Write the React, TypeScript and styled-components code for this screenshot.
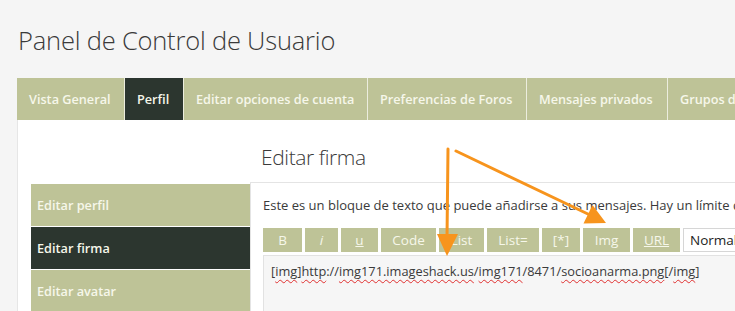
import styled, { createGlobalStyle } from 'styled-components';

const GlobalStyle = createGlobalStyle`
  html, body {
    margin: 0;
    padding: 0;
    background: #f5f5f5;
    font-family: "Open Sans", "Noto Sans", sans-serif;
    overflow: hidden;
  }
`;

const palette = {
  khaki: '#bec397',
  dark: '#2c362f',
  light: '#f6f7ea',
  text: '#3a3a3a',
};

const Page = styled.div`
  position: relative;
  width: 735px;
  height: 311px;
  padding-left: 17px;
  box-sizing: border-box;
  overflow: hidden;
`;

const Title = styled.h1`
  margin: 0;
  height: 78px;
  padding: 23px 0 0 1px;
  box-sizing: border-box;
  font-size: 25.5px;
  font-weight: 300;
  color: ${palette.text};
  letter-spacing: -0.2px;
  white-space: nowrap;
`;

const Tabs = styled.div`
  display: flex;
  gap: 1px;
  height: 42px;
  background: #ecedde;
`;

const Tab = styled.div<{ $w: number; $active?: boolean }>`
  flex: none;
  width: ${(p) => p.$w}px;
  padding-left: 12px;
  box-sizing: border-box;
  display: flex;
  align-items: center;
  background: ${(p) => (p.$active ? palette.dark : palette.khaki)};
  color: ${palette.light};
  font-size: 12.7px;
  font-weight: 600;
  white-space: nowrap;
  overflow: hidden;
`;

const Panel = styled.div`
  display: grid;
  grid-template-columns: 219px 1fr;
  grid-template-rows: 62px 1fr;
  padding-left: 13px;
  height: 191px;
  background: #ffffff;
  border-left: 1px solid #e6e6e6;
  box-sizing: border-box;
`;

const Heading = styled.h2`
  grid-column: 2;
  grid-row: 1;
  margin: 0;
  padding: 23px 0 0 11px;
  font-size: 21px;
  font-weight: 300;
  color: ${palette.text};
  letter-spacing: -0.4px;
`;

const SideMenu = styled.div`
  grid-column: 1;
  grid-row: 2;
  display: flex;
  flex-direction: column;
  gap: 1px;
  padding-top: 2px;
`;

const MenuItem = styled.div<{ $active?: boolean }>`
  height: 42px;
  display: flex;
  align-items: center;
  padding-left: 6px;
  background: ${(p) => (p.$active ? palette.dark : palette.khaki)};
  color: ${palette.light};
  font-size: 12.7px;
  font-weight: 600;
`;

const Box = styled.div`
  grid-column: 2;
  grid-row: 2;
  border-top: 1px solid #e4e4e4;
  border-left: 1px solid #e4e4e4;
  padding: 13px 0 0 12px;
  background: #ffffff;
  overflow: hidden;
`;

const Intro = styled.p`
  margin: 0;
  font-size: 13px;
  line-height: 18px;
  color: ${palette.text};
  white-space: nowrap;
`;

const Toolbar = styled.div`
  display: flex;
  gap: 3px;
  margin-top: 14px;
  height: 24px;
`;

const ToolButton = styled.div<{ $w: number; $italic?: boolean; $underline?: boolean }>`
  flex: none;
  width: ${(p) => p.$w}px;
  display: flex;
  align-items: center;
  justify-content: center;
  background: ${palette.khaki};
  color: ${palette.light};
  font-size: 13.5px;
  font-style: ${(p) => (p.$italic ? 'italic' : 'normal')};
  text-decoration: ${(p) => (p.$underline ? 'underline' : 'none')};
`;

const SizeSelect = styled.div`
  flex: none;
  width: 80px;
  display: flex;
  align-items: center;
  padding-left: 6px;
  background: #ffffff;
  border: 1px solid #d6d6d6;
  box-sizing: border-box;
  font-size: 13.5px;
  color: #222;
`;

const Editor = styled.div`
  margin-top: 3px;
  height: 80px;
  background: #f6f6f6;
  border: 1px solid #e2e2e2;
  border-right: none;
  padding: 6px 0 0 7px;
  font-size: 12.8px;
  color: ${palette.text};
  white-space: nowrap;
`;

const Misspelt = styled.span`
  text-decoration: underline wavy #e03030;
  text-decoration-thickness: 1px;
  text-underline-offset: 3px;
`;

const Arrows = styled.svg`
  position: absolute;
  left: 0;
  top: 0;
  pointer-events: none;
`;

const tabs: [string, number, boolean?][] = [
  ['Vista General', 107],
  ['Perfil', 58, true],
  ['Editar opciones de cuenta', 183],
  ['Preferencias de Foros', 158],
  ['Mensajes privados', 140],
  ['Grupos de usuarios', 150],
];

const buttons: { label: string; w: number; italic?: boolean; underline?: boolean }[] = [
  { label: 'B', w: 39 },
  { label: 'i', w: 33, italic: true },
  { label: 'u', w: 37, underline: true },
  { label: 'Code', w: 55 },
  { label: 'List', w: 45 },
  { label: 'List=', w: 52 },
  { label: '[*]', w: 38 },
  { label: 'Img', w: 47 },
  { label: 'URL', w: 47, underline: true },
];

export default function App() {
  return (
    <>
      <GlobalStyle />
      <Page>
        <Title>Panel de Control de Usuario</Title>
        <Tabs>
          {tabs.map(([label, w, active]) => (
            <Tab key={label} $w={w} $active={active}>
              {label}
            </Tab>
          ))}
        </Tabs>
        <Panel>
          <Heading>Editar firma</Heading>
          <SideMenu>
            <MenuItem>Editar perfil</MenuItem>
            <MenuItem $active>Editar firma</MenuItem>
            <MenuItem>Editar avatar</MenuItem>
          </SideMenu>
          <Box>
            <Intro>
              Este es un bloque de texto que puede añadirse a sus mensajes. Hay un límite de 255 caracteres
            </Intro>
            <Toolbar>
              {buttons.map((b) => (
                <ToolButton key={b.label} $w={b.w} $italic={b.italic} $underline={b.underline}>
                  {b.label}
                </ToolButton>
              ))}
              <SizeSelect>Normal</SizeSelect>
            </Toolbar>
            <Editor>
              [<Misspelt>img</Misspelt>]<Misspelt>http</Misspelt>://<Misspelt>img171.imageshack.us</Misspelt>/
              <Misspelt>img171</Misspelt>/8471/<Misspelt>socioanarma.png</Misspelt>[/<Misspelt>img</Misspelt>]
            </Editor>
          </Box>
        </Panel>
        <Arrows width="735" height="311" viewBox="0 0 735 311">
          <g stroke="#f7941d" strokeWidth="3" strokeLinecap="round" fill="none">
            <line x1="448" y1="149" x2="447" y2="238" />
            <line x1="456" y1="151" x2="590" y2="215" />
          </g>
          <g fill="#f7941d">
            <polygon points="437,234 458,234 447,256" />
            <polygon points="583.5,223.5 592.5,205 606,223" />
          </g>
        </Arrows>
      </Page>
    </>
  );
}
